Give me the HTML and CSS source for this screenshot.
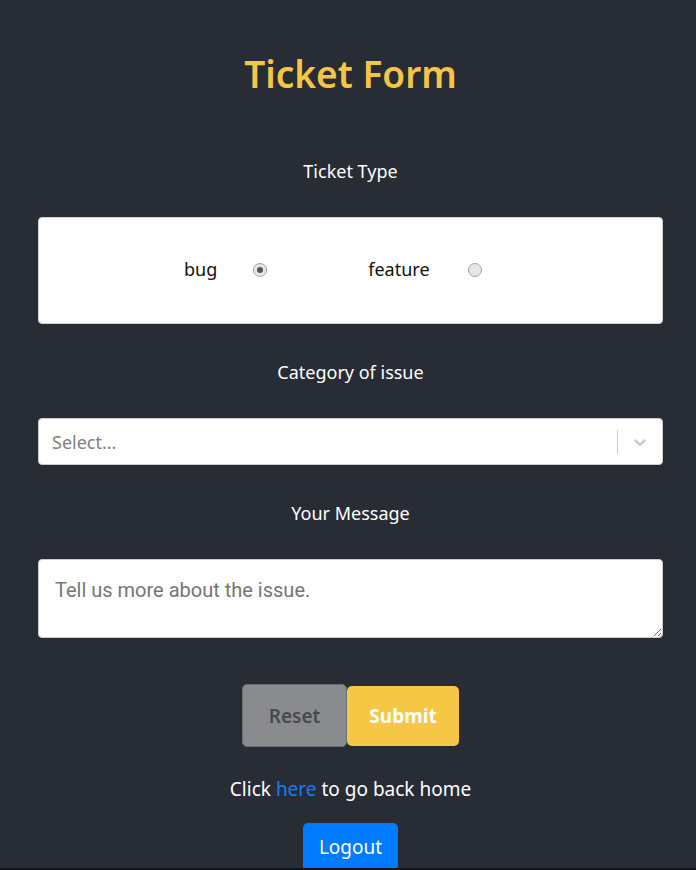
FILE: index.html
```html
<!DOCTYPE html>
<html lang="en">
<head>
<meta charset="utf-8">
<title>Ticket Form</title>
<link rel="stylesheet" href="styles.css">
</head>
<body>
<div class="app">
  <form class="form">
    <h1 class="title">Ticket Form</h1>

    <div class="label">Ticket Type</div>
    <div class="radio-box">
      <label class="radio-item">
        <span class="radio-text">bug</span>
        <span class="radio checked"></span>
      </label>
      <label class="radio-item feature">
        <span class="radio-text">feature</span>
        <span class="radio"></span>
      </label>
    </div>

    <div class="label">Category of issue</div>
    <div class="select">
      <span class="placeholder">Select...</span>
      <span class="sep"></span>
      <span class="chevron">
        <svg viewBox="0 0 20 20" width="20" height="20"><path fill="#c8c8c8" d="M4.516 7.548c0.436-0.446 1.043-0.481 1.576 0l3.908 3.747 3.908-3.747c0.533-0.481 1.141-0.446 1.574 0 0.436 0.445 0.408 1.197 0 1.615-0.406 0.418-4.695 4.502-4.695 4.502-0.217 0.223-0.502 0.335-0.787 0.335s-0.57-0.112-0.789-0.335c0 0-4.287-4.084-4.695-4.502s-0.436-1.17 0-1.615z"/></svg>
      </span>
    </div>

    <div class="label">Your Message</div>
    <textarea class="message" placeholder="Tell us more about the issue."></textarea>

    <div class="buttons">
      <button type="button" class="btn reset">Reset</button>
      <button type="button" class="btn submit">Submit</button>
    </div>

    <p class="home">Click <a href="#" class="link">here</a> to go back home</p>

    <div class="logout-row">
      <button type="button" class="btn logout">Logout</button>
    </div>
  </form>
</div>
</body>
</html>
```
FILE: styles.css
```css
html {
  background: #141414;
}
body {
  margin: 0;
  height: 868px;
  overflow: hidden;
  background: #282c34;
  font-family: "Noto Sans", "Open Sans", sans-serif;
  color: #ffffff;
}
.app {
  display: flex;
  flex-direction: column;
}
.form {
  width: 625px;
  margin-left: 38px;
  display: flex;
  flex-direction: column;
}
.title {
  margin: 50px 0 0;
  height: 48px;
  line-height: 48px;
  text-align: center;
  font-size: 37px;
  font-weight: 600;
  color: #f7c546;
}
.label {
  height: 24px;
  line-height: 24px;
  text-align: center;
  font-size: 18px;
  color: #ffffff;
}
.title + .label { margin-top: 61px; }
.radio-box {
  margin-top: 34px;
  height: 107px;
  box-sizing: border-box;
  background: #ffffff;
  border: 1px solid #cfd3d7;
  border-radius: 4px;
  display: flex;
  align-items: center;
  padding-left: 145px;
  padding-bottom: 4px;
  color: #111111;
  font-size: 18px;
}
.radio-item {
  display: flex;
  align-items: center;
}
.radio-text { line-height: 24px; }
.radio-item .radio { margin-left: 36px; }
.radio-item.feature { margin-left: 101px; }
.radio-item.feature .radio { margin-left: 38px; }
.radio {
  width: 14px;
  height: 14px;
  box-sizing: border-box;
  border-radius: 50%;
  border: 1px solid #a5a5a5;
  background: #e6e6e6;
  display: flex;
  align-items: center;
  justify-content: center;
  margin-top: 2px;
}
.radio.checked::after {
  content: "";
  width: 6px;
  height: 6px;
  border-radius: 50%;
  background: #555555;
}
.radio-box + .label { margin-top: 36px; }
.select {
  margin-top: 34px;
  height: 47px;
  box-sizing: border-box;
  background: #ffffff;
  border: 1px solid #cccccc;
  border-radius: 4px;
  display: flex;
  align-items: center;
  padding-left: 13px;
}
.placeholder {
  flex: 1;
  color: #808080;
  font-size: 18px;
}
.sep {
  width: 1px;
  height: 24px;
  background: #cccccc;
}
.chevron {
  width: 44px;
  display: flex;
  justify-content: center;
  align-items: center;
}
.chevron svg { display: block; }
.select + .label { margin-top: 36px; }
.message {
  margin-top: 34px;
  height: 79px;
  box-sizing: border-box;
  border: 1px solid #cccccc;
  border-radius: 4px;
  padding: 18px 16px 10px;
  font-family: Roboto, sans-serif;
  font-size: 20px;
  color: #333333;
  resize: vertical;
  outline: none;
}
.message::placeholder { color: #757575; }
.buttons {
  margin-top: 46px;
  display: flex;
  justify-content: center;
  align-items: center;
}
.btn {
  font-family: "Noto Sans", "Open Sans", sans-serif;
  font-size: 19px;
  border-radius: 5px;
  cursor: pointer;
}
.reset {
  width: 105px;
  height: 63px;
  background: #8a8b8f;
  border: 1px solid #6d6e72;
  color: #48494d;
  font-weight: 600;
}
.submit {
  width: 112px;
  height: 60px;
  background: #f6c745;
  border: none;
  color: #ffffff;
  font-weight: 700;
}
.home {
  margin: 30px 0 0;
  height: 24px;
  line-height: 24px;
  text-align: center;
  font-size: 19px;
}
.link {
  color: #1a7bff;
  text-decoration: none;
}
.logout-row {
  margin-top: 22px;
  display: flex;
  justify-content: center;
}
.logout {
  width: 95px;
  height: 48px;
  background: #007bff;
  border: none;
  color: #ffffff;
  font-weight: 400;
}
```
